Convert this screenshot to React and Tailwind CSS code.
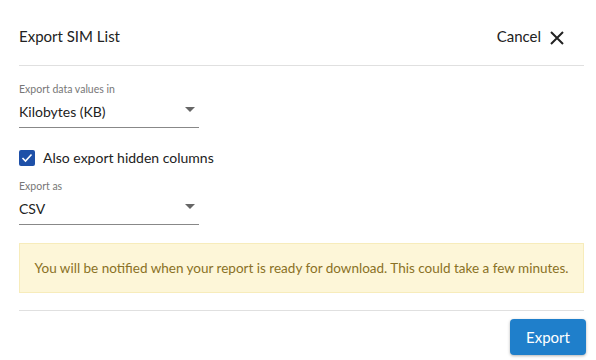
import React from "react";

export default function App() {
  return (
    <div className="w-[596px] h-[360px] bg-white text-[#222] overflow-hidden" style={{ fontFamily: "Lato, 'Noto Sans', sans-serif" }}>
      <div className="pl-[19px] pr-[12px]">
        <div className="flex items-center justify-between h-[66px] border-b border-[#e0e0e0]">
          <div className="text-[15px] pt-[8px]">Export SIM List</div>
          <div className="flex items-center gap-[8px] pt-[8px] pr-[19px]">
            <span className="text-[15px]">Cancel</span>
            <svg width="16" height="16" viewBox="0 0 16 16" className="mt-[2px]">
              <path d="M2 2 L14 14 M14 2 L2 14" stroke="#222" strokeWidth="2" />
            </svg>
          </div>
        </div>
      </div>
      <div className="pl-[19px] pr-[12px]">
        <div className="pt-[16px]">
          <div className="text-[10.5px] text-[#777] leading-[14px]">Export data values in</div>
          <div className="w-[180px] h-[32px] border-b border-[#888] flex items-center justify-between">
            <span className="text-[14px]">Kilobytes (KB)</span>
            <svg width="10" height="5" viewBox="0 0 10 5" className="mr-[4px] mb-[5px]">
              <path d="M0 0 L10 0 L5 5 Z" fill="#666" />
            </svg>
          </div>
        </div>
        <div className="flex items-center gap-[8px] mt-[21px] h-[17px]">
          <div className="w-[16px] h-[16px] rounded-[2px] bg-[#1e50a8] flex items-center justify-center">
            <svg width="12" height="10" viewBox="0 0 12 10">
              <path d="M1.5 5 L4.5 8 L10.5 1.5" stroke="white" strokeWidth="1.6" fill="none" />
            </svg>
          </div>
          <span className="text-[14px]">Also export hidden columns</span>
        </div>
        <div className="mt-[13px]">
          <div className="text-[10.5px] text-[#777] leading-[14px]">Export as</div>
          <div className="w-[180px] h-[32px] border-b border-[#888] flex items-center justify-between">
            <span className="text-[14px]">CSV</span>
            <svg width="10" height="5" viewBox="0 0 10 5" className="mr-[4px] mb-[5px]">
              <path d="M0 0 L10 0 L5 5 Z" fill="#666" />
            </svg>
          </div>
        </div>
        <div className="mt-[18px] h-[50px] bg-[#fdf6d8] border border-[#f7ecbb] flex items-center justify-center text-[13.5px] text-[#8a7125]">
          You will be notified when your report is ready for download. This could take a few minutes.
        </div>
        <div className="mt-[17px] border-t border-[#e0e0e0]"></div>
        <div className="flex justify-end mt-[8px] mr-[-2px]">
          <button className="w-[76px] h-[36px] rounded-[4px] bg-[#1f7fcb] text-white text-[15px] shadow-[0_1px_3px_rgba(0,0,0,0.3)]">Export</button>
        </div>
      </div>
    </div>
  );
}
